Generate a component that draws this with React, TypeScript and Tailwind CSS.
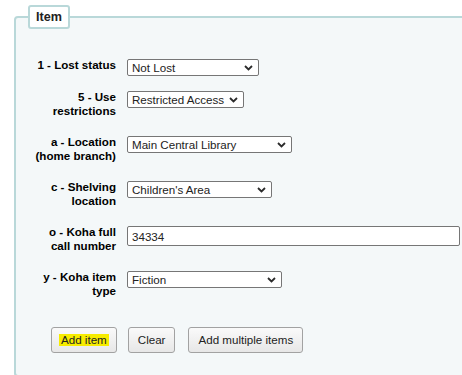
import { useState } from "react";

interface SelectFieldProps {
    options: string[];
    width: string;
}

const Chevron = () => (
    <svg width="9" height="6" viewBox="0 0 9 6" className="pointer-events-none absolute right-[6px] top-1/2 -translate-y-1/2">
        <path d="M1 1 L4.5 4.5 L8 1" fill="none" stroke="#2b2b2b" strokeWidth="1.8" />
    </svg>
);

const SelectField = ({ options, width }: SelectFieldProps) => {
    const [value, setValue] = useState(options[0]);
    return (
        <div className={`relative shrink-0 ${width}`}>
            <select
                value={value}
                onChange={e => setValue(e.target.value)}
                className="block h-[17px] w-full appearance-none rounded-[2px] border border-[#767676] bg-white pl-[4px] pr-[18px] text-[11.6px] leading-[15px] text-[#222]"
            >
                {options.map(o => (
                    <option key={o}>{o}</option>
                ))}
            </select>
            <Chevron />
        </div>
    );
};

const Label = ({ children }: { children: React.ReactNode }) => (
    <label className="-mt-[1px] w-[84px] shrink-0 pb-[3px] text-right text-[11.6px] font-bold leading-[14px] text-black">
        {children}
    </label>
);

const rows = [
    { label: "1 - Lost status", options: ["Not Lost", "Lost", "Long overdue"], width: "w-[132px]" },
    { label: "5 - Use restrictions", options: ["Restricted Access", "No restrictions"], width: "w-[117px]" },
    { label: "a - Location (home branch)", options: ["Main Central Library", "East Branch"], width: "w-[165px]" },
    { label: "c - Shelving location", options: ["Children's Area", "Adult Fiction", "Reference"], width: "w-[145px]" },
];

const Button = ({ children, className = "" }: { children: React.ReactNode; className?: string }) => (
    <button className={`h-[26px] rounded-[3px] border border-[#a2a2a2] bg-gradient-to-b from-[#fafafa] to-[#e7e7e7] px-[9px] text-[11.6px] leading-[14px] text-[#222] ${className}`}>
        {children}
    </button>
);

const App = () => {
    const [callNumber, setCallNumber] = useState("34334");

    return (
        <div className="h-[375px] w-[462px] overflow-hidden bg-white pt-[5px] pl-[14px]" style={{ fontFamily: '"Liberation Sans", Arial, sans-serif' }}>
            <fieldset className="w-[480px] rounded-[4px] border-2 border-[#b9d8d9] bg-[#f4f8f9] px-0">
                <legend className="ml-[12px] rounded-[3px] border-2 border-[#b9d8d9] bg-white px-[6px] py-[3px] text-[12.6px] font-bold leading-[14px] text-[#222]">
                    Item
                </legend>
                <div className="pl-[16px] pt-[30px]">
                    {rows.map(r => (
                        <div key={r.label} className="mb-[15px] flex items-start gap-[11px]">
                            <Label>{r.label}</Label>
                            <SelectField options={r.options} width={r.width} />
                        </div>
                    ))}
                    <div className="mb-[15px] flex items-start gap-[11px]">
                        <Label>o - Koha full call number</Label>
                        <input
                            value={callNumber}
                            onChange={e => setCallNumber(e.target.value)}
                            className="h-[20px] w-[333px] shrink-0 rounded-[2px] border border-[#767676] bg-white pl-[4px] text-[11.6px] text-[#222] outline-none"
                        />
                    </div>
                    <div className="mb-[15px] flex items-start gap-[11px]">
                        <Label>y - Koha item type</Label>
                        <SelectField options={["Fiction", "Non-fiction", "Reference"]} width="w-[155px]" />
                    </div>
                </div>
                <div className="flex pb-[22px] pl-[35px] pt-[11px]">
                    <Button>
                        <span className="inline-block bg-[#f7ec00] px-[2px] -mx-[2px] leading-[12px]">Add item</span>
                    </Button>
                    <Button className="ml-[11px]">Clear</Button>
                    <Button className="ml-[13px]">Add multiple items</Button>
                </div>
            </fieldset>
        </div>
    );
};

export default App;
